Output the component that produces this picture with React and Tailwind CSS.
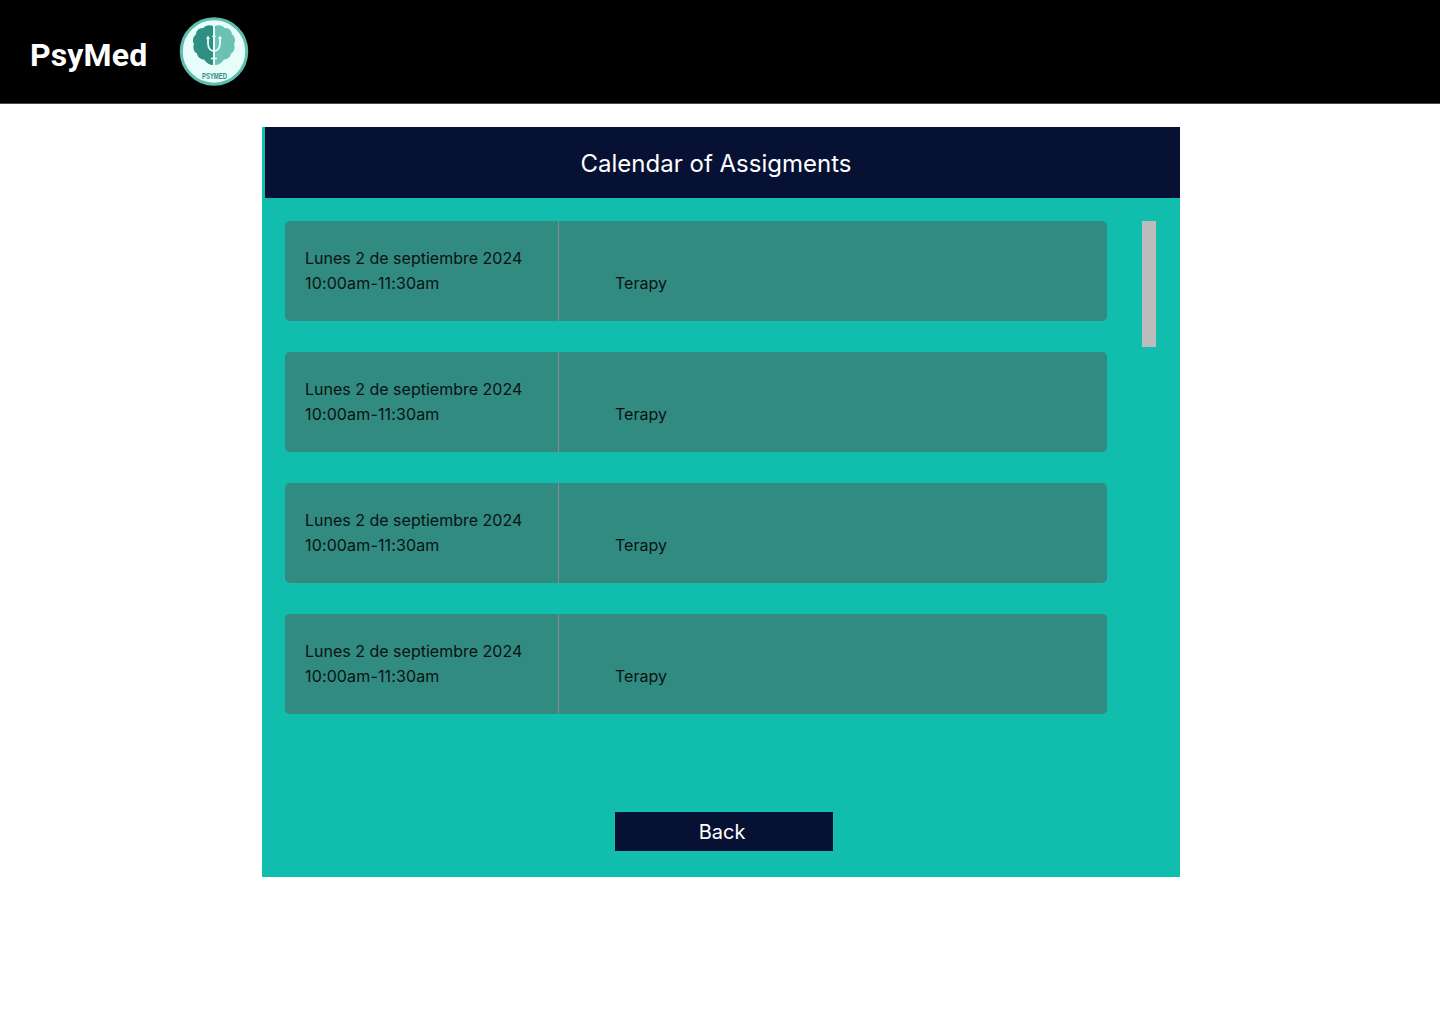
import React from "react";

function Logo() {
  return (
    <svg width="70" height="72" viewBox="0 0 70 72" className="block">
      <circle cx="35" cy="35.5" r="32.75" fill="#e6fdfa" stroke="#5fbdb0" strokeWidth="3" />
      <path d="M34 10 C30 8.5 26.5 9.5 24.5 12 C20.5 11.5 17 14.5 17 18.5 C14 20.5 13 25 15 28 C13.5 32 15 36 18 37.5 C18.5 41 21.5 43.5 25 43.5 C27 47 30.5 49 34 49 Z" fill="#2f8f84" />
      <path d="M36 10 C40 8.5 43.5 9.5 45.5 12 C49.5 11.5 53 14.5 53 18.5 C56 20.5 57 25 55 28 C56.5 32 55 36 52 37.5 C51.5 41 48.5 43.5 45 43.5 C43 47 39.5 49 36 49 Z" fill="#6cc1b5" />
      <g fill="none" stroke="#e6fdfa">
        <path d="M35 20 V48" strokeWidth="1.8" />
        <path d="M29 22 V27 C29 32 31.5 35 35 35 C38.5 35 41 32 41 27 V22" strokeWidth="1.8" />
        <path d="M32 42.5 H38" strokeWidth="1.5" />
      </g>
      <g fill="#e6fdfa">
        <path d="M29 19.5 L27 23 H31 Z" />
        <path d="M35 17.5 L33 21 H37 Z" />
        <path d="M41 19.5 L39 23 H43 Z" />
      </g>
      <text x="35.5" y="63" textAnchor="middle" fontSize="9" fontWeight="700" fill="#2f8f84" style={{ fontFamily: '"Liberation Sans", sans-serif' }} textLength="25" lengthAdjust="spacingAndGlyphs">PSYMED</text>
    </svg>
  );
}

function Card() {
  return (
    <div className="flex h-[100px] w-[822px] rounded-[5px] bg-[#328b80] text-[16px] leading-[25px] text-[#0a1214]">
      <div className="w-[274px] border-r border-[#8f8a8a] pl-5 pt-[25px]">
        <p>Lunes 2 de septiembre 2024</p>
        <p className="tracking-[0.14px]">10:00am-11:30am</p>
      </div>
      <div className="pl-[56px] pt-[50px]">Terapy</div>
    </div>
  );
}

export default function App() {
  return (
    <div className="min-h-[1024px] bg-white font-['Inter',sans-serif]">
      <header className="flex h-[104px] items-start border-b border-[#4a4a4a] bg-black pl-[30px]">
        <span className="mt-[35px] font-['Roboto',sans-serif] text-[32px] leading-[40px] font-bold tracking-[0.15px] text-white">PsyMed</span>
        <div className="ml-[32px] mt-[16px]"><Logo /></div>
      </header>
      <main className="ml-[262px] mt-[23px] h-[750px] w-[918px] bg-[#11bdad]">
        <div className="ml-[3px] flex h-[71px] items-center justify-center bg-[#071133] pr-[13px] pt-[2px] text-[24px] leading-[32px] text-white">
          Calendar of Assigments
        </div>
        <div className="flex pl-[23px] pt-[23px]">
          <div className="flex flex-col gap-[31px]">
            <Card />
            <Card />
            <Card />
            <Card />
          </div>
          <div className="ml-[35px] h-[126px] w-[14px] bg-[#bcbcbc]" />
        </div>
        <button className="ml-[353px] mt-[98px] flex h-[39px] w-[218px] items-center justify-center bg-[#071133] pr-[4px] text-[20px] text-white">
          Back
        </button>
      </main>
    </div>
  );
}
